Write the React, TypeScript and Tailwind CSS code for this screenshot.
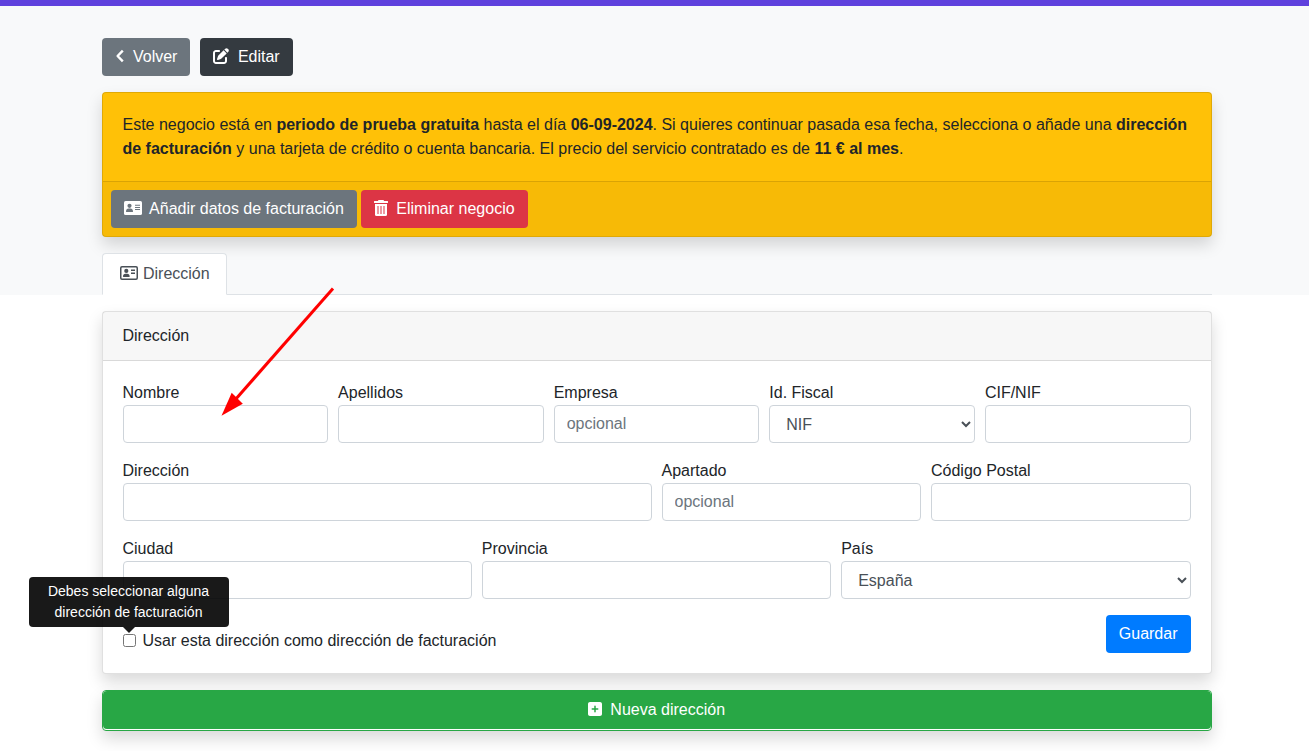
import { useState, type ReactNode } from 'react';
import { FaPenToSquare, FaSquarePlus } from 'react-icons/fa6';

type FieldProps = {
  id: string;
  label: string;
  placeholder?: string;
  options?: string[];
  className?: string;
  children?: ReactNode;
};

const control =
  'block w-full h-[38px] px-3 rounded border border-[#ced4da] bg-white text-[#495057] placeholder:text-[#6c757d]';

const button =
  'h-[38px] px-[13px] rounded text-white whitespace-nowrap cursor-pointer';

function Field({
  id,
  label,
  placeholder,
  options,
  className = '',
  children,
}: FieldProps) {
  return (
    <div className={`relative min-w-0 ${className}`}>
      <label htmlFor={id} className="block">
        {label}
      </label>
      {options ? (
        <select id={id} className={control}>
          {options.map((option) => (
            <option key={option}>{option}</option>
          ))}
        </select>
      ) : (
        <input
          id={id}
          type="text"
          placeholder={placeholder}
          className={control}
        />
      )}
      {children}
    </div>
  );
}

function ChevronIcon() {
  return (
    <svg
      viewBox="0 0 10 16"
      className="inline-block w-[10px] h-4 mr-1 align-[-2px]"
      fill="none"
      stroke="currentColor"
      strokeWidth="2.4"
      strokeLinejoin="round"
    >
      <path d="M7.800 2.600L2.600 8L7.800 13.400" />
    </svg>
  );
}

function CardIcon() {
  return (
    <svg
      viewBox="0 0 18 16"
      className="inline-block w-[18px] h-4 mr-1 align-[-2px]"
    >
      <rect y="1" width="18" height="14" rx="1.6" fill="currentColor" />
      <g fill="#6c757d">
        <circle cx="5.500" cy="5.800" r="2.100" />
        <path d="M2 11.400C2 9.700 3.100 8.600 4.500 8.600h2c1.400 0 2.500 1.100 2.500 2.800 0 .3-.2.6-.6.6H2.600c-.4 0-.6-.3-.6-.6z" />
        <path d="M11 4.800h5v1h-5zM11 6.900h5v1h-5zM11 9h5v1h-5z" />
      </g>
    </svg>
  );
}

function CardOutlineIcon() {
  return (
    <svg
      viewBox="0 0 18 16"
      className="inline-block w-[18px] h-4 mx-px align-[-2px]"
      fill="currentColor"
    >
      <rect
        x=".75"
        y="1.750"
        width="16.500"
        height="12.500"
        rx="1.200"
        fill="none"
        stroke="currentColor"
        strokeWidth="1.500"
      />
      <circle cx="6.300" cy="5.900" r="2.100" />
      <path d="M2.900 11.500c0-1.700 1.100-2.800 2.500-2.800h1.800c1.400 0 2.500 1.100 2.500 2.800 0 .3-.2.500-.6.500H3.500c-.4 0-.6-.2-.6-.5z" />
      <path d="M11 4.600h4v1.300h-4zM11 7.600h4v1.300h-4z" />
    </svg>
  );
}

function TrashIcon() {
  return (
    <svg
      viewBox="0 0 14 16"
      className="inline-block w-[14px] h-4 mr-1 align-[-2px]"
      fill="currentColor"
    >
      <path d="M4.500 0h5l.6 1h3.400a.5.5 0 0 1 .5.5v1a.5.5 0 0 1-.5.5H.5a.5.5 0 0 1-.5-.5v-1A.5.5 0 0 1 .5 1h3.400z" />
      <path d="M1 4h12v10.500a1.500 1.500 0 0 1-1.500 1.500h-9A1.500 1.500 0 0 1 1 14.500z" />
      <path
        d="M4 6v8M7 6v8M10 6v8"
        stroke="#dc3545"
        strokeWidth="2"
        strokeOpacity=".5"
      />
    </svg>
  );
}

function Arrow() {
  return (
    <svg
      viewBox="0 0 114 130"
      className="absolute left-[98px] -top-[94px] w-[114px] h-[130px] pointer-events-none"
    >
      <path d="M112 1.500L14 113" stroke="#f00" strokeWidth="3" />
      <path d="M.5 128.700L10.700 105.700L21.800 116.700z" fill="#f00" />
    </svg>
  );
}

export default function App() {
  const [billing, setBilling] = useState(false);

  return (
    <div className="font-['Liberation_Sans',Arial,sans-serif] text-base leading-6 text-[#212529]">
      <header className="border-t-[6px] border-[#5f41dd] bg-[#f8f9fa] pl-1 pt-8">
        <div className="max-w-[1110px] mx-auto">
          <div className="flex gap-[10px] mb-4">
            <button type="button" className={`${button} bg-[#6c757d]`}>
              <ChevronIcon /> Volver
            </button>
            <button type="button" className={`${button} bg-[#343a40]`}>
              <FaPenToSquare className="inline-block w-4 h-4 mr-1 align-[-2px]" />{' '}
              Editar
            </button>
          </div>

          <section className="mb-4 rounded border border-black/12 bg-[#ffc107] shadow-[0_8px_16px_rgba(0,0,0,0.15)]">
            <p className="p-5">
              Este negocio está en <b>periodo de prueba gratuita</b> hasta el
              día <b>06-09-2024</b>. Si quieres continuar pasada esa fecha,
              selecciona o añade una <b>dirección de facturación</b> y una
              tarjeta de crédito o cuenta bancaria. El precio del servicio
              contratado es de <b>11 € al mes</b>.
            </p>
            <div className="flex gap-1 p-2 border-t border-black/12 bg-black/3">
              <button type="button" className={`${button} bg-[#6c757d]`}>
                <CardIcon /> Añadir datos de facturación
              </button>
              <button type="button" className={`${button} bg-[#dc3545]`}>
                <TrashIcon /> Eliminar negocio
              </button>
            </div>
          </section>

          <nav className="flex border-b border-[#dee2e6]">
            <a
              href="#direccion"
              className="-mb-px px-4 py-2 rounded-t border border-[#dee2e6] border-b-white bg-white text-[#495057]"
            >
              <CardOutlineIcon /> Dirección
            </a>
          </nav>
        </div>
      </header>

      <main className="pl-1 pt-4 pb-5">
        <div className="max-w-[1110px] mx-auto">
          <form
            id="direccion"
            className="mb-4 rounded border border-black/12 bg-white shadow-[0_8px_16px_rgba(0,0,0,0.15)]"
          >
            <h2 className="px-5 py-3 border-b border-black/12 bg-black/3">
              Dirección
            </h2>
            <div className="flex flex-col gap-4 p-5">
              <div className="grid grid-cols-5 gap-[10px]">
                <Field id="nombre" label="Nombre">
                  <Arrow />
                </Field>
                <Field id="apellidos" label="Apellidos" />
                <Field id="empresa" label="Empresa" placeholder="opcional" />
                <Field
                  id="id-fiscal"
                  label="Id. Fiscal"
                  options={['NIF', 'CIF', 'NIE']}
                />
                <Field id="cif-nif" label="CIF/NIF" />
              </div>
              <div className="grid grid-cols-4 gap-[10px]">
                <Field id="calle" label="Dirección" className="col-span-2" />
                <Field id="apartado" label="Apartado" placeholder="opcional" />
                <Field id="codigo-postal" label="Código Postal" />
              </div>
              <div className="grid grid-cols-3 gap-[10px]">
                <Field id="ciudad" label="Ciudad" />
                <Field id="provincia" label="Provincia" />
                <Field
                  id="pais"
                  label="País"
                  options={['España', 'Francia', 'Portugal']}
                />
              </div>
              <div className="flex justify-between items-end">
                <div className="relative flex items-start">
                  <input
                    id="facturacion"
                    type="checkbox"
                    checked={billing}
                    onChange={(e) => setBilling(e.target.checked)}
                    aria-describedby="aviso-facturacion"
                    className="w-[13px] h-[13px] mt-[5px] mr-[7px]"
                  />
                  <label htmlFor="facturacion">
                    Usar esta dirección como dirección de facturación
                  </label>
                  <div
                    id="aviso-facturacion"
                    role="tooltip"
                    className="absolute bottom-[26px] -left-[94px] w-[200px] px-2 py-1 rounded bg-black/90 text-center text-sm leading-[21px] text-white"
                  >
                    Debes seleccionar alguna dirección de facturación
                    <span className="absolute top-full left-[94px] border-x-[6px] border-t-[6px] border-x-transparent border-t-black/90" />
                  </div>
                </div>
                <button type="submit" className={`${button} bg-[#007bff]`}>
                  Guardar
                </button>
              </div>
            </div>
          </form>

          <div className="rounded border border-[#28a745] bg-white pb-px shadow-[0_8px_16px_rgba(0,0,0,0.15)]">
            <button
              type="button"
              className={`${button} block w-full bg-[#28a745]`}
            >
              <FaSquarePlus className="inline-block w-[14px] h-4 mr-1 align-[-2px]" />{' '}
              Nueva dirección
            </button>
          </div>
        </div>
      </main>
    </div>
  );
}
